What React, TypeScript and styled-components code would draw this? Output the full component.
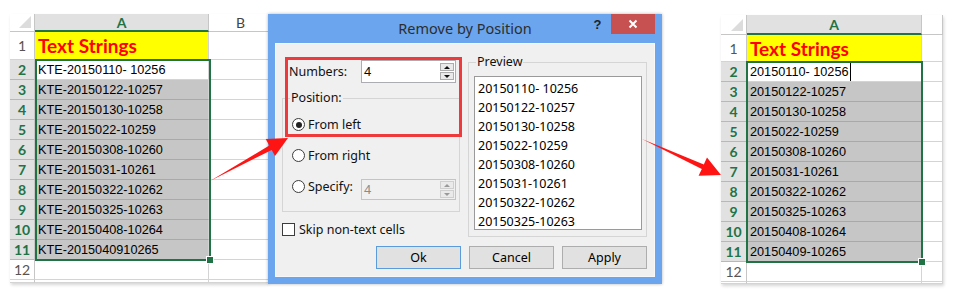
import React from "react";
import styled, { createGlobalStyle } from "styled-components";

const GREEN = "#217346";

const GlobalStyle = createGlobalStyle`
  html, body { margin: 0; padding: 0; background: #ffffff; }
  body { font-family: "Liberation Sans", Arial, sans-serif; }
  * { box-sizing: border-box; }
`;

const Page = styled.div`
  position: relative;
  width: 953px;
  height: 297px;
  overflow: hidden;
  padding: 14px 0 0 10px;
  display: flex;
  align-items: flex-start;
  background: #fff;
`;

/* ---------------- Spreadsheet ---------------- */

const SheetGrid = styled.div<{ $cols: string; $rows: string; $width: number; $mt: number; $ml: number }>`
  position: relative;
  flex: none;
  width: ${(p) => p.$width}px;
  margin-top: ${(p) => p.$mt}px;
  margin-left: ${(p) => p.$ml}px;
  display: grid;
  grid-template-columns: ${(p) => p.$cols};
  grid-template-rows: ${(p) => p.$rows};
  overflow: hidden;
  background: #fff;
  box-shadow: 1px 2px 3px rgba(0, 0, 0, 0.16);
`;

const CornerCell = styled.div`
  display: flex;
  align-items: flex-end;
  justify-content: flex-end;
  padding: 0 3px 3px 0;
  border-right: 1px solid #c6c6c6;
  border-bottom: 1px solid #c6c6c6;
  background: #fff;
`;

const CornerTriangle = styled.div`
  width: 0;
  height: 0;
  border-left: 12px solid transparent;
  border-bottom: 12px solid #dcdcdc;
`;

const ColHeader = styled.div<{ $active?: boolean }>`
  display: flex;
  align-items: center;
  justify-content: center;
  font-family: Lato, "Liberation Sans", sans-serif;
  font-size: 14px;
  font-weight: ${(p) => (p.$active ? 700 : 400)};
  color: ${(p) => (p.$active ? GREEN : "#444")};
  background: ${(p) => (p.$active ? "#e1e1e1" : "#fff")};
  border-right: 1px solid #c6c6c6;
  border-bottom: ${(p) => (p.$active ? `2px solid ${GREEN}` : "1px solid #c6c6c6")};
`;

const RowHeader = styled.div<{ $active?: boolean }>`
  display: flex;
  align-items: center;
  justify-content: center;
  font-family: Lato, "Liberation Sans", sans-serif;
  font-size: 14px;
  font-weight: ${(p) => (p.$active ? 700 : 400)};
  color: ${(p) => (p.$active ? GREEN : "#555")};
  background: ${(p) => (p.$active ? "#e1e1e1" : "#fff")};
  border-right: 1px solid #c6c6c6;
  border-bottom: 1px solid ${(p) => (p.$active ? "#b8b8b8" : "#d4d4d4")};
`;

type Fill = "title" | "selected" | "plain";

const Cell = styled.div<{ $fill: Fill }>`
  display: flex;
  align-items: center;
  padding-left: 3px;
  white-space: nowrap;
  overflow: hidden;
  font-family: "Liberation Sans", Arial, sans-serif;
  font-size: 12.7px;
  color: #000;
  background: ${(p) => (p.$fill === "title" ? "#ffff00" : p.$fill === "selected" ? "#c6c6c6" : "#fff")};
  border-right: 1px solid #d4d4d4;
  border-bottom: 1px solid ${(p) => (p.$fill === "selected" ? "#a9a9a9" : "#d4d4d4")};
`;

const TitleText = styled.span`
  font-family: Lato, "Liberation Sans", sans-serif;
  font-weight: 700;
  font-size: 19px;
  color: #ff0000;
`;

const Caret = styled.span`
  display: inline-block;
  width: 1px;
  height: 18px;
  margin-left: 1px;
  background: #000;
`;

const Selection = styled.div<{ $left: number; $top: number; $w: number; $h: number }>`
  position: absolute;
  left: ${(p) => p.$left}px;
  top: ${(p) => p.$top}px;
  width: ${(p) => p.$w}px;
  height: ${(p) => p.$h}px;
  border: 2px solid ${GREEN};
  pointer-events: none;
`;

const FillHandle = styled.div`
  position: absolute;
  right: -4px;
  bottom: -4px;
  width: 6px;
  height: 6px;
  background: ${GREEN};
  outline: 1px solid #fff;
`;

type SheetProps = {
  values: string[];
  cols: string;
  rows: string;
  width: number;
  mt: number;
  ml: number;
  sel: { left: number; top: number; w: number; h: number };
  caret?: boolean;
  showB?: boolean;
};

function Sheet({ values, cols, rows, width, mt, ml, sel, caret, showB }: SheetProps) {
  return (
    <SheetGrid $cols={cols} $rows={rows} $width={width} $mt={mt} $ml={ml}>
      <CornerCell>
        <CornerTriangle />
      </CornerCell>
      <ColHeader $active>A</ColHeader>
      <ColHeader>{showB ? "B" : ""}</ColHeader>

      <RowHeader>1</RowHeader>
      <Cell $fill="title">
        <TitleText>Text Strings</TitleText>
      </Cell>
      <Cell $fill="plain" />

      {values.map((v, i) => (
        <React.Fragment key={v}>
          <RowHeader $active>{i + 2}</RowHeader>
          <Cell $fill={i === 0 ? "plain" : "selected"}>
            {v}
            {caret && i === 0 ? <Caret /> : null}
          </Cell>
          <Cell $fill="plain" />
        </React.Fragment>
      ))}

      <RowHeader>12</RowHeader>
      <Cell $fill="plain" />
      <Cell $fill="plain" />

      <RowHeader />
      <Cell $fill="plain" />
      <Cell $fill="plain" />

      <Selection $left={sel.left} $top={sel.top} $w={sel.w} $h={sel.h}>
        <FillHandle />
      </Selection>
    </SheetGrid>
  );
}

/* ---------------- Dialog ---------------- */

const Dialog = styled.div`
  position: relative;
  flex: none;
  width: 394px;
  height: 270px;
  background: #6aa5ee;
  display: flex;
  flex-direction: column;
  box-shadow: 0 0 3px rgba(0, 0, 0, 0.3);
  font-family: "Noto Sans", "Segoe UI", sans-serif;
  font-size: 12.5px;
  color: #111;
`;

const TitleBar = styled.div`
  height: 29px;
  flex: none;
  display: grid;
  grid-template-columns: 78px 1fr 78px;
  align-items: start;
`;

const TitleText2 = styled.div`
  grid-column: 2;
  text-align: center;
  line-height: 29px;
  font-size: 14.5px;
  color: #2d2d2d;
`;

const TitleControls = styled.div`
  grid-column: 3;
  display: flex;
  align-items: flex-start;
  padding-right: 7px;
`;

const HelpButton = styled.div`
  width: 27px;
  height: 21px;
  display: flex;
  align-items: center;
  justify-content: center;
  font-family: "Liberation Sans", Arial, sans-serif;
  font-weight: 700;
  font-size: 13px;
  color: #222;
`;

const CloseButton = styled.div`
  width: 44px;
  height: 20px;
  background: #c75050;
  display: flex;
  align-items: center;
  justify-content: center;
`;

const Body = styled.div`
  flex: 1;
  margin: 0 7px 7px 7px;
  background: #f0f0f0;
  box-shadow: inset 0 0 0 1px #f7f7f7;
  padding: 17px 8px 8px 7px;
  display: flex;
  flex-direction: column;
`;

const TopGrid = styled.div`
  display: grid;
  grid-template-columns: 180px 179px;
  column-gap: 6px;
`;

const LeftCol = styled.div`
  position: relative;
  display: flex;
  flex-direction: column;
`;

const NumbersRow = styled.div`
  display: flex;
  align-items: center;
  height: 23px;
  padding-left: 7px;
`;

const FieldLabel = styled.span<{ $w: number }>`
  width: ${(p) => p.$w}px;
  flex: none;
`;

const SpinInput = styled.div<{ $disabled?: boolean; $h: number }>`
  width: 95px;
  height: ${(p) => p.$h}px;
  flex: none;
  display: flex;
  align-items: center;
  justify-content: space-between;
  padding: 0 1px 0 2px;
  background: ${(p) => (p.$disabled ? "#f0f0f0" : "#fff")};
  border: 1px solid ${(p) => (p.$disabled ? "#c4c4c4" : "#abadb3")};
  color: ${(p) => (p.$disabled ? "#8a8a8a" : "#000")};
`;

const SpinStack = styled.div`
  display: flex;
  flex-direction: column;
  gap: 1px;
`;

const SpinButton = styled.div<{ $disabled?: boolean }>`
  width: 14px;
  height: 8px;
  display: flex;
  align-items: center;
  justify-content: center;
  background: #eaeaea;
  border: 1px solid ${(p) => (p.$disabled ? "#cfcfcf" : "#acacac")};
`;

const Triangle = styled.div<{ $down?: boolean; $disabled?: boolean }>`
  width: 0;
  height: 0;
  border-left: 3px solid transparent;
  border-right: 3px solid transparent;
  ${(p) => (p.$down ? "border-top" : "border-bottom")}: 3px solid ${(p) => (p.$disabled ? "#9a9a9a" : "#111")};
`;

const GroupBox = styled.div<{ $w: number; $h: number; $mt: number; $pad: string }>`
  width: ${(p) => p.$w}px;
  height: ${(p) => p.$h}px;
  margin-top: ${(p) => p.$mt}px;
  border: 1px solid #d5d5d5;
  padding: ${(p) => p.$pad};
  display: flex;
  flex-direction: column;
`;

const Legend = styled.div<{ $ml: number }>`
  align-self: flex-start;
  height: 16px;
  line-height: 16px;
  margin: -9px 0 0 ${(p) => p.$ml}px;
  padding: 0 1px;
  background: #f0f0f0;
`;

const RadioRow = styled.div<{ $mt: number }>`
  display: flex;
  align-items: flex-start;
  margin-top: ${(p) => p.$mt}px;
`;

const RadioItem = styled.div<{ $w?: number }>`
  display: flex;
  align-items: center;
  height: 15px;
  width: ${(p) => (p.$w ? `${p.$w}px` : "auto")};
  flex: none;
  gap: 3px;
`;

const RadioCircle = styled.div<{ $checked?: boolean }>`
  width: 13px;
  height: 13px;
  border-radius: 50%;
  border: 1px solid #3c3c3c;
  background: #fff;
  display: flex;
  align-items: center;
  justify-content: center;
  &::after {
    content: "";
    width: 6px;
    height: 6px;
    border-radius: 50%;
    background: ${(p) => (p.$checked ? "#222" : "transparent")};
  }
`;

const CheckRow = styled.div`
  display: flex;
  align-items: center;
  gap: 4px;
  margin-top: 11px;
  height: 13px;
`;

const CheckBox = styled.div`
  width: 13px;
  height: 13px;
  border: 1px solid #3c3c3c;
  background: #fff;
`;

const RedFrame = styled.div`
  position: absolute;
  left: 3px;
  top: -3px;
  width: 177px;
  height: 80px;
  border: 3px solid #ee3a3a;
  pointer-events: none;
`;

const ListBox = styled.div`
  margin-top: 6px;
  height: 154px;
  background: #fff;
  border: 1px solid #9a9a9a;
  padding: 2px 0 0 3px;
`;

const ListItem = styled.div`
  height: 19px;
  line-height: 19px;
  white-space: nowrap;
  color: #000;
`;

const ButtonRow = styled.div`
  margin-top: auto;
  display: flex;
  justify-content: flex-end;
  gap: 8px;
`;

const Button = styled.div<{ $default?: boolean }>`
  width: 85px;
  height: 23px;
  display: flex;
  align-items: center;
  justify-content: center;
  background: #e1e1e1;
  border: 1px solid ${(p) => (p.$default ? "#5b9bdc" : "#adadad")};
  color: #000;
`;

/* ---------------- Arrows ---------------- */

const ArrowLayer = styled.svg`
  position: absolute;
  left: 0;
  top: 0;
  pointer-events: none;
`;

const leftValues = [
  "KTE-20150110- 10256",
  "KTE-20150122-10257",
  "KTE-20150130-10258",
  "KTE-2015022-10259",
  "KTE-20150308-10260",
  "KTE-2015031-10261",
  "KTE-20150322-10262",
  "KTE-20150325-10263",
  "KTE-20150408-10264",
  "KTE-2015040910265",
];

const rightValues = [
  "20150110- 10256",
  "20150122-10257",
  "20150130-10258",
  "2015022-10259",
  "20150308-10260",
  "2015031-10261",
  "20150322-10262",
  "20150325-10263",
  "20150408-10264",
  "20150409-10265",
];

function Spin({ value, disabled, h }: { value: string; disabled?: boolean; h: number }) {
  return (
    <SpinInput $disabled={disabled} $h={h}>
      <span>{value}</span>
      <SpinStack>
        <SpinButton $disabled={disabled}>
          <Triangle $disabled={disabled} />
        </SpinButton>
        <SpinButton $disabled={disabled}>
          <Triangle $down $disabled={disabled} />
        </SpinButton>
      </SpinStack>
    </SpinInput>
  );
}

export default function App() {
  return (
    <>
      <GlobalStyle />
      <Page>
        <Sheet
          values={leftValues}
          cols="25px 174px 64px"
          rows="18px 28px repeat(11, 20px) 3px"
          width={258}
          mt={0}
          ml={0}
          sel={{ left: 25, top: 45, w: 176, h: 202 }}
          showB
        />

        <Dialog>
          <TitleBar>
            <TitleText2>Remove by Position</TitleText2>
            <TitleControls>
              <HelpButton>?</HelpButton>
              <CloseButton>
                <svg width="10" height="10" viewBox="0 0 10 10">
                  <path d="M1.5 1.5 L8.5 8.5 M8.5 1.5 L1.5 8.5" stroke="#fff" strokeWidth="2" />
                </svg>
              </CloseButton>
            </TitleControls>
          </TitleBar>
          <Body>
            <TopGrid>
              <LeftCol>
                <NumbersRow>
                  <FieldLabel $w={72}>Numbers:</FieldLabel>
                  <Spin value="4" h={23} />
                </NumbersRow>
                <GroupBox $w={178} $h={114} $mt={15} $pad="0 0 0 9px">
                  <Legend $ml={-2}>Position:</Legend>
                  <RadioRow $mt={11}>
                    <RadioItem>
                      <RadioCircle $checked />
                      <span>From left</span>
                    </RadioItem>
                  </RadioRow>
                  <RadioRow $mt={16}>
                    <RadioItem>
                      <RadioCircle />
                      <span>From right</span>
                    </RadioItem>
                  </RadioRow>
                  <RadioRow $mt={16}>
                    <RadioItem $w={69}>
                      <RadioCircle />
                      <span>Specify:</span>
                    </RadioItem>
                    <Spin value="4" disabled h={21} />
                  </RadioRow>
                </GroupBox>
                <CheckRow>
                  <CheckBox />
                  <span>Skip non-text cells</span>
                </CheckRow>
                <RedFrame />
              </LeftCol>

              <GroupBox $w={179} $h={175} $mt={2} $pad="0 4px 6px 5px">
                <Legend $ml={2}>Preview</Legend>
                <ListBox>
                  {rightValues.slice(0, 8).map((v) => (
                    <ListItem key={v}>{v}</ListItem>
                  ))}
                </ListBox>
              </GroupBox>
            </TopGrid>
            <ButtonRow>
              <Button $default>Ok</Button>
              <Button>Cancel</Button>
              <Button>Apply</Button>
            </ButtonRow>
          </Body>
        </Dialog>

        <Sheet
          values={rightValues}
          cols="26px 175px 21px"
          rows="20px 27px repeat(11, 20px) 2px"
          width={222}
          mt={1}
          ml={59}
          sel={{ left: 25, top: 46, w: 177, h: 202 }}
          caret
        />

        <ArrowLayer width="953" height="297" viewBox="0 0 953 297">
          <polygon
            points="210,181 269.3,145.5 265.7,139 288,138 275,156 271.7,149.9"
            fill="#ff1414"
          />
          <polygon
            points="642,139 703.8,164.4 707,157.6 721,175 698.6,175.8 701.8,169"
            fill="#ff1414"
          />
        </ArrowLayer>
      </Page>
    </>
  );
}
